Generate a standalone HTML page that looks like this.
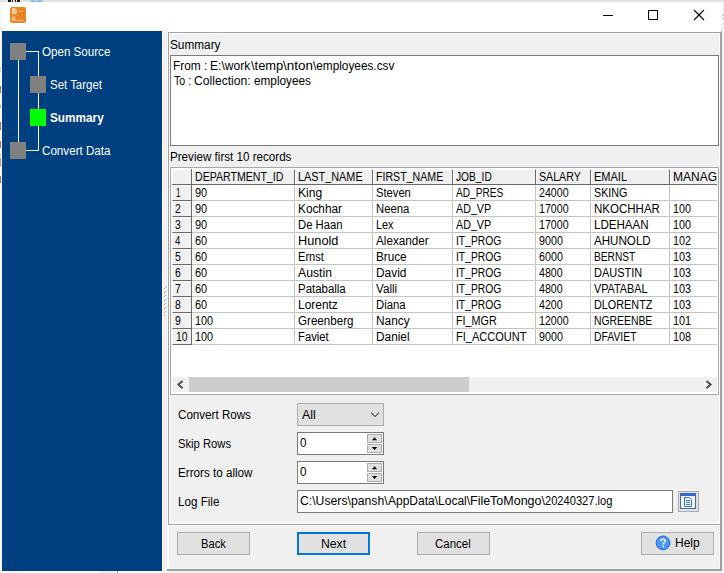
<!DOCTYPE html>
<html><head><meta charset="utf-8"><title>FileToMongo</title>
<style>
html,body{margin:0;padding:0;}
body{width:724px;height:573px;overflow:hidden;background:#fff;position:relative;font-family:"Liberation Sans",sans-serif;font-size:12px;color:#000;}
.a{position:absolute;}
.t{position:absolute;white-space:pre;line-height:16px;height:16px;transform-origin:0 0;}
.u{font-style:normal;position:relative;top:-1px;}
.btn{position:absolute;background:#e1e1e1;border:1px solid #adadad;box-sizing:border-box;}
.sunk{position:absolute;background:#fff;box-sizing:border-box;border:1px solid #7a7a7a;}
.hc{position:absolute;background:#f0f0f0;box-sizing:border-box;border:1px solid;border-color:#fff #696969 #696969 #fff;}
</style></head><body>

<div class="a" style="left:0px;top:0px;width:724px;height:2px;background:#e2e2e2;"></div>
<div class="a" style="left:8px;top:0px;width:1.5px;height:1.6px;background:#1a1a1a;"></div>
<div class="a" style="left:10px;top:0px;width:1.2px;height:1.6px;background:#1a1a1a;"></div>
<div class="a" style="left:12px;top:0px;width:1.2px;height:1.6px;background:#1a1a1a;"></div>
<div class="a" style="left:14.5px;top:0px;width:1.6px;height:1.6px;background:#1a1a1a;"></div>
<div class="a" style="left:17px;top:0px;width:1.4px;height:1.6px;background:#1a1a1a;"></div>
<div class="a" style="left:18.4px;top:0px;width:1.8px;height:1.6px;background:#1a1a1a;"></div>
<div class="a" style="left:30px;top:0px;width:13px;height:2px;background:#a6c8ee;"></div>
<div class="a" style="left:32px;top:1px;width:1.5px;height:1px;background:#6a9ad6;"></div>
<div class="a" style="left:38px;top:1px;width:3px;height:1px;background:#6a9ad6;"></div>
<div class="a" style="left:0px;top:2px;width:2px;height:571px;background:#f6f6f6;"></div>
<div class="a" style="left:0px;top:67px;width:1.3px;height:5px;background:#9fd8e8;opacity:.6;"></div>
<div class="a" style="left:0px;top:86px;width:1.3px;height:7px;background:#3a2a30;opacity:.6;"></div>
<div class="a" style="left:0px;top:105px;width:1.3px;height:3px;background:#8a8a90;opacity:.6;"></div>
<div class="a" style="left:0px;top:122px;width:1.3px;height:8px;background:#5a1a2a;opacity:.6;"></div>
<div class="a" style="left:0px;top:141px;width:1.3px;height:7px;background:#7a1a20;opacity:.6;"></div>
<div class="a" style="left:0px;top:153px;width:1.3px;height:14px;background:#c8c4c0;opacity:.6;"></div>
<div class="a" style="left:0px;top:158px;width:1.3px;height:8px;background:#a07850;opacity:.6;"></div>
<div class="a" style="left:0px;top:176px;width:1.3px;height:7px;background:#3a3030;opacity:.6;"></div>
<div class="a" style="left:0px;top:571px;width:724px;height:2px;background:#f6f6f6;"></div>
<div class="a" style="left:101px;top:571px;width:17px;height:2px;background:#ececec;"></div>
<div class="a" style="left:117px;top:571px;width:1px;height:2px;background:#8c8c8c;"></div>
<div class="a" style="left:722px;top:2px;width:2px;height:569px;background:#f3f3f3;"></div>
<div class="a" style="left:2px;top:2px;width:720px;height:29px;background:#fff;"></div>
<div class="a" style="left:722px;top:15px;width:2px;height:1px;background:#c8c8c8;"></div>
<div class="a" style="left:722px;top:18px;width:2px;height:1px;background:#c8c8c8;"></div>
<svg class="a" style="left:10px;top:7px" width="16" height="16" viewBox="0 0 16 16"><rect x="0" y="0" width="16" height="16" rx="2.2" fill="#e9821f"/><path d="M2.3 1.7 H5 L6.4 3.1 V6.7 H2.3 Z" fill="#fff" fill-opacity=".5" stroke="#fff" stroke-width="0.7" stroke-opacity=".8"/><rect x="8.2" y="3.8" width="4.8" height="1.2" fill="#fff" opacity=".33"/><rect x="7.4" y="7.8" width="1.2" height="1.1" fill="#fff" opacity=".33"/><ellipse cx="3.5" cy="11.8" rx="2" ry="2.5" fill="#fff" fill-opacity=".22" stroke="#fff" stroke-width="0.6" stroke-opacity=".55"/><rect x="3" y="10.9" width="1.1" height="2" fill="#fff" opacity=".9"/><rect x="6.2" y="12.8" width="8.2" height="1.4" fill="#fff" opacity=".38"/></svg>
<div class="a" style="left:603px;top:15px;width:10px;height:1px;background:#000;"></div>
<div class="a" style="left:648px;top:10px;width:10px;height:10px;box-sizing:border-box;border:1px solid #000"></div>
<svg class="a" style="left:693px;top:9px" width="12" height="12" viewBox="0 0 12 12"><path d="M1 1 L11 11 M11 1 L1 11" stroke="#000" stroke-width="1.1" fill="none"/></svg>
<div class="a" style="left:162px;top:31px;width:560px;height:540px;background:#f0f0f0;"></div>
<div class="a" style="left:2px;top:31px;width:160px;height:540px;background:#003f80;"></div>
<div class="a" style="left:162px;top:31px;width:1px;height:540px;background:#fff;"></div>
<div class="a" style="left:167px;top:31px;width:1px;height:540px;background:#fff;"></div>
<div class="a" style="left:168px;top:525px;width:1px;height:46px;background:#fff;"></div>
<div class="a" style="left:167px;top:525px;width:553px;height:1px;background:#fff;"></div>
<div class="a" style="left:167px;top:31px;width:554px;height:1px;background:#fff;"></div>
<div class="a" style="left:721px;top:31px;width:1px;height:540px;background:#a0a0a0;"></div>
<div class="a" style="left:720px;top:32px;width:1px;height:493px;background:#a2a2a8;"></div>
<div class="a" style="left:720px;top:525px;width:1px;height:46px;background:#a0a0a0;"></div>
<div class="a" style="left:719px;top:526px;width:1px;height:43px;background:#f4f4f4;"></div>
<div class="a" style="left:169px;top:568px;width:551px;height:1px;background:#f4f4f4;"></div>
<div class="a" style="left:167px;top:569px;width:555px;height:2px;background:#a0a0a0;"></div>
<div class="a" style="left:168px;top:32px;width:553px;height:493px;box-sizing:border-box;border:1px solid #a2a2a8;"></div>
<div class="a" style="left:169px;top:33px;width:551px;height:491px;box-sizing:border-box;border:1px solid #fff;"></div>
<div class="a" style="left:18px;top:59px;width:1px;height:84px;background:#fff;"></div>
<div class="a" style="left:26px;top:51px;width:13px;height:1px;background:#fff;"></div>
<div class="a" style="left:38px;top:51px;width:1px;height:100px;background:#fff;"></div>
<div class="a" style="left:26px;top:150px;width:13px;height:1px;background:#fff;"></div>
<div class="a" style="left:10px;top:43px;width:16px;height:17px;background:#808080;"></div>
<div class="a" style="left:30px;top:76px;width:16px;height:17px;background:#808080;"></div>
<div class="a" style="left:30px;top:109px;width:16px;height:17px;background:#00ff00;"></div>
<div class="a" style="left:10px;top:142px;width:16px;height:17px;background:#808080;"></div>
<div class="a" style="left:165px;top:287px;width:1px;height:1px;background:#adadad;"></div>
<div class="a" style="left:164px;top:288px;width:1px;height:1px;background:#adadad;"></div>
<div class="a" style="left:166px;top:288px;width:1px;height:1px;background:#fff;"></div>
<div class="a" style="left:165px;top:289px;width:1px;height:1px;background:#fff;"></div>
<div class="a" style="left:165px;top:291px;width:1px;height:1px;background:#adadad;"></div>
<div class="a" style="left:164px;top:292px;width:1px;height:1px;background:#adadad;"></div>
<div class="a" style="left:166px;top:292px;width:1px;height:1px;background:#fff;"></div>
<div class="a" style="left:165px;top:293px;width:1px;height:1px;background:#fff;"></div>
<div class="a" style="left:165px;top:295px;width:1px;height:1px;background:#adadad;"></div>
<div class="a" style="left:164px;top:296px;width:1px;height:1px;background:#adadad;"></div>
<div class="a" style="left:166px;top:296px;width:1px;height:1px;background:#fff;"></div>
<div class="a" style="left:165px;top:297px;width:1px;height:1px;background:#fff;"></div>
<div class="a" style="left:165px;top:299px;width:1px;height:1px;background:#adadad;"></div>
<div class="a" style="left:164px;top:300px;width:1px;height:1px;background:#adadad;"></div>
<div class="a" style="left:166px;top:300px;width:1px;height:1px;background:#fff;"></div>
<div class="a" style="left:165px;top:301px;width:1px;height:1px;background:#fff;"></div>
<div class="a" style="left:165px;top:303px;width:1px;height:1px;background:#adadad;"></div>
<div class="a" style="left:164px;top:304px;width:1px;height:1px;background:#adadad;"></div>
<div class="a" style="left:166px;top:304px;width:1px;height:1px;background:#fff;"></div>
<div class="a" style="left:165px;top:305px;width:1px;height:1px;background:#fff;"></div>
<div class="a" style="left:165px;top:307px;width:1px;height:1px;background:#adadad;"></div>
<div class="a" style="left:164px;top:308px;width:1px;height:1px;background:#adadad;"></div>
<div class="a" style="left:166px;top:308px;width:1px;height:1px;background:#fff;"></div>
<div class="a" style="left:165px;top:309px;width:1px;height:1px;background:#fff;"></div>
<div class="a" style="left:165px;top:311px;width:1px;height:1px;background:#adadad;"></div>
<div class="a" style="left:164px;top:312px;width:1px;height:1px;background:#adadad;"></div>
<div class="a" style="left:166px;top:312px;width:1px;height:1px;background:#fff;"></div>
<div class="a" style="left:165px;top:313px;width:1px;height:1px;background:#fff;"></div>
<div class="a" style="left:164px;top:315px;width:1px;height:1px;background:#b4b4b4;"></div>
<div class="sunk" style="left:170px;top:55px;width:549px;height:91px"></div>
<div class="a" style="left:170px;top:167px;width:549px;height:228px;box-sizing:border-box;border:1px solid #a6a6ac;background:#fff"></div>
<div class="hc" style="left:172px;top:169px;width:20px;height:16px;"></div>
<div class="hc" style="left:192px;top:169px;width:103px;height:16px;"></div>
<div class="hc" style="left:295px;top:169px;width:78px;height:16px;"></div>
<div class="hc" style="left:373px;top:169px;width:80px;height:16px;"></div>
<div class="hc" style="left:453px;top:169px;width:83px;height:16px;"></div>
<div class="hc" style="left:536px;top:169px;width:55px;height:16px;"></div>
<div class="hc" style="left:591px;top:169px;width:79px;height:16px;"></div>
<div class="hc" style="left:670px;top:169px;width:47px;height:16px;border-right:none;"></div>
<div class="hc" style="left:172px;top:185px;width:20px;height:16px"></div>
<div class="a" style="left:192px;top:200px;width:525px;height:1px;background:#c4c4c4;"></div>
<div class="hc" style="left:172px;top:201px;width:20px;height:16px"></div>
<div class="a" style="left:192px;top:216px;width:525px;height:1px;background:#c4c4c4;"></div>
<div class="hc" style="left:172px;top:217px;width:20px;height:16px"></div>
<div class="a" style="left:192px;top:232px;width:525px;height:1px;background:#c4c4c4;"></div>
<div class="hc" style="left:172px;top:233px;width:20px;height:16px"></div>
<div class="a" style="left:192px;top:248px;width:525px;height:1px;background:#c4c4c4;"></div>
<div class="hc" style="left:172px;top:249px;width:20px;height:16px"></div>
<div class="a" style="left:192px;top:264px;width:525px;height:1px;background:#c4c4c4;"></div>
<div class="hc" style="left:172px;top:265px;width:20px;height:16px"></div>
<div class="a" style="left:192px;top:280px;width:525px;height:1px;background:#c4c4c4;"></div>
<div class="hc" style="left:172px;top:281px;width:20px;height:16px"></div>
<div class="a" style="left:192px;top:296px;width:525px;height:1px;background:#c4c4c4;"></div>
<div class="hc" style="left:172px;top:297px;width:20px;height:16px"></div>
<div class="a" style="left:192px;top:312px;width:525px;height:1px;background:#c4c4c4;"></div>
<div class="hc" style="left:172px;top:313px;width:20px;height:16px"></div>
<div class="a" style="left:192px;top:328px;width:525px;height:1px;background:#c4c4c4;"></div>
<div class="hc" style="left:172px;top:329px;width:20px;height:16px"></div>
<div class="a" style="left:192px;top:344px;width:525px;height:1px;background:#c4c4c4;"></div>
<div class="a" style="left:294px;top:185px;width:1px;height:160px;background:#c4c4c4;"></div>
<div class="a" style="left:372px;top:185px;width:1px;height:160px;background:#c4c4c4;"></div>
<div class="a" style="left:452px;top:185px;width:1px;height:160px;background:#c4c4c4;"></div>
<div class="a" style="left:535px;top:185px;width:1px;height:160px;background:#c4c4c4;"></div>
<div class="a" style="left:590px;top:185px;width:1px;height:160px;background:#c4c4c4;"></div>
<div class="a" style="left:669px;top:185px;width:1px;height:160px;background:#c4c4c4;"></div>
<div class="a" style="left:172px;top:184px;width:545px;height:1px;background:#696969;"></div>
<div class="a" style="left:191px;top:169px;width:1px;height:176px;background:#696969;"></div>
<div class="a" style="left:172px;top:377px;width:545px;height:15px;background:#f0f0f0;"></div>
<div class="a" style="left:189px;top:377px;width:280px;height:15px;background:#cdcdcd;"></div>
<svg class="a" style="left:172px;top:377px" width="17" height="15" viewBox="0 0 17 15"><path d="M10.6 4 L6.4 7.6 L10.6 11.2" stroke="#505050" stroke-width="2" fill="none"/></svg>
<svg class="a" style="left:700px;top:377px" width="17" height="15" viewBox="0 0 17 15"><path d="M6.4 4 L10.6 7.6 L6.4 11.2" stroke="#505050" stroke-width="2" fill="none"/></svg>
<div class="btn" style="left:297px;top:403px;width:87px;height:23px"></div>
<svg class="a" style="left:369px;top:410px" width="12" height="9" viewBox="0 0 12 9"><path d="M2.1 2.6 L6.05 6.6 L10 2.6" stroke="#444" stroke-width="1.05" fill="none"/></svg>
<div class="sunk" style="left:297px;top:432px;width:87px;height:23px"></div>
<div class="btn" style="left:367px;top:434px;width:15px;height:9px"></div>
<div class="btn" style="left:367px;top:444px;width:15px;height:9px"></div>
<svg class="a" style="left:371px;top:437px" width="7" height="4" viewBox="0 0 7 4"><path d="M0.9 3.2 L3.55 0.3 L6.2 3.2 Z" fill="#000"/></svg>
<svg class="a" style="left:371px;top:447px" width="7" height="4" viewBox="0 0 7 4"><path d="M0.9 0 L3.55 2.9 L6.2 0 Z" fill="#000"/></svg>
<div class="sunk" style="left:297px;top:461px;width:87px;height:23px"></div>
<div class="btn" style="left:367px;top:463px;width:15px;height:9px"></div>
<div class="btn" style="left:367px;top:473px;width:15px;height:9px"></div>
<svg class="a" style="left:371px;top:466px" width="7" height="4" viewBox="0 0 7 4"><path d="M0.9 3.2 L3.55 0.3 L6.2 3.2 Z" fill="#000"/></svg>
<svg class="a" style="left:371px;top:476px" width="7" height="4" viewBox="0 0 7 4"><path d="M0.9 0 L3.55 2.9 L6.2 0 Z" fill="#000"/></svg>
<div class="sunk" style="left:297px;top:490px;width:376px;height:23px"></div>
<div class="btn" style="left:678px;top:491px;width:21px;height:21px"></div>
<svg class="a" style="left:680px;top:493px" width="16" height="16" viewBox="0 0 16 16"><rect x="0" y="0" width="16" height="16" fill="#2f6bcb"/><rect x="1" y="3" width="14" height="12" fill="#f8f5f1"/><rect x="1" y="1" width="1.3" height="1.3" fill="#e8102a"/><path d="M4.5 4.5 H9.3 L11.5 6.7 V13.5 H4.5 Z" fill="#dcf5ff" stroke="#3b73d3" stroke-width="1"/><path d="M6 7.5 H10 M6 9.5 H10 M6 11.5 H10" stroke="#5f7c7c" stroke-width="1"/></svg>
<div class="btn" style="left:177px;top:532px;width:73px;height:23px"></div>
<div class="btn" style="left:297px;top:532px;width:73px;height:23px;border:2px solid #0078d7"></div>
<div class="btn" style="left:417px;top:532px;width:73px;height:23px"></div>
<div class="btn" style="left:641px;top:532px;width:73px;height:23px"></div>
<svg class="a" style="left:655px;top:535px" width="16" height="16" viewBox="0 0 16 16"><circle cx="8" cy="7.9" r="6.9" fill="#4b93f7" stroke="#1d6be0" stroke-width="1"/><path d="M5.9 6.3 Q5.9 4.2 8 4.2 Q10.1 4.2 10.1 6 Q10.1 7.1 9 7.9 Q8.1 8.6 8.1 9.6" stroke="#fff" stroke-width="1.5" fill="none"/><rect x="7.3" y="10.6" width="1.6" height="1.6" fill="#fff"/></svg>
<span class="t" style="left:42px;top:44px;transform:scaleX(0.9663);color:#fff">Open Source</span>
<span class="t" style="left:50px;top:77px;transform:scaleX(0.9537);color:#fff">Set Target</span>
<span class="t" style="left:50px;top:110px;transform:scaleX(0.9833);font-weight:bold;color:#fff">Summary</span>
<span class="t" style="left:42px;top:143px;transform:scaleX(0.9694);color:#fff">Convert Data</span>
<span class="t" style="left:170px;top:37px;transform:scaleX(0.9833);">Summary</span>
<span class="t" style="left:173px;top:58px;transform:scaleX(0.9877);">From :</span>
<span class="t" style="left:210px;top:58px;transform:scaleX(1.0051);">E:\work</span>
<span class="t" style="left:251px;top:58px;transform:scaleX(1.0712);">\temp</span>
<span class="t" style="left:283px;top:58px;transform:scaleX(1.1192);">\nton</span>
<span class="t" style="left:313px;top:58px;transform:scaleX(0.9837);">\employees.csv</span>
<span class="t" style="left:174px;top:73px;transform:scaleX(0.8833);">To :</span>
<span class="t" style="left:194px;top:73px;transform:scaleX(1.0110);">Collection:</span>
<span class="t" style="left:254px;top:73px;transform:scaleX(0.9817);">employees</span>
<span class="t" style="left:170px;top:149px;transform:scaleX(0.9685);">Preview first 10 records</span>
<span class="t" style="left:195px;top:169px;transform:scaleX(0.8810);">DEPARTMENT<i class="u">_</i>ID</span>
<span class="t" style="left:298px;top:169px;transform:scaleX(0.9057);">LAST<i class="u">_</i>NAME</span>
<span class="t" style="left:376px;top:169px;transform:scaleX(0.8846);">FIRST<i class="u">_</i>NAME</span>
<span class="t" style="left:456px;top:169px;transform:scaleX(0.8509);">JOB<i class="u">_</i>ID</span>
<span class="t" style="left:539px;top:169px;transform:scaleX(0.8865);">SALARY</span>
<span class="t" style="left:594px;top:169px;transform:scaleX(0.9180);">EMAIL</span>
<span class="t" style="left:673px;top:169px;">MANAG</span>
<span class="t" style="left:176px;top:185px;transform:scaleX(0.6857);">1</span>
<span class="t" style="left:195px;top:185px;transform:scaleX(0.9120);">90</span>
<span class="t" style="left:298px;top:185px;transform:scaleX(1.0067);">King</span>
<span class="t" style="left:376px;top:185px;transform:scaleX(0.9324);">Steven</span>
<span class="t" style="left:456px;top:185px;transform:scaleX(0.8414);">AD<i class="u">_</i>PRES</span>
<span class="t" style="left:539px;top:185px;transform:scaleX(0.8892);">24000</span>
<span class="t" style="left:594px;top:185px;transform:scaleX(0.8944);">SKING</span>
<span class="t" style="left:175px;top:201px;transform:scaleX(0.8696);">2</span>
<span class="t" style="left:195px;top:201px;transform:scaleX(0.9120);">90</span>
<span class="t" style="left:298px;top:201px;transform:scaleX(0.9839);">Kochhar</span>
<span class="t" style="left:376px;top:201px;transform:scaleX(0.9449);">Neena</span>
<span class="t" style="left:456px;top:201px;transform:scaleX(0.8929);">AD<i class="u">_</i>VP</span>
<span class="t" style="left:539px;top:201px;transform:scaleX(0.8875);">17000</span>
<span class="t" style="left:594px;top:201px;transform:scaleX(0.9597);">NKOCHHAR</span>
<span class="t" style="left:673px;top:201px;transform:scaleX(0.8960);">100</span>
<span class="t" style="left:175px;top:217px;transform:scaleX(0.8696);">3</span>
<span class="t" style="left:195px;top:217px;transform:scaleX(0.9120);">90</span>
<span class="t" style="left:298px;top:217px;transform:scaleX(0.9399);">De Haan</span>
<span class="t" style="left:376px;top:217px;transform:scaleX(0.8986);">Lex</span>
<span class="t" style="left:456px;top:217px;transform:scaleX(0.8929);">AD<i class="u">_</i>VP</span>
<span class="t" style="left:539px;top:217px;transform:scaleX(0.8875);">17000</span>
<span class="t" style="left:594px;top:217px;transform:scaleX(0.9644);">LDEHAAN</span>
<span class="t" style="left:673px;top:217px;transform:scaleX(0.8960);">100</span>
<span class="t" style="left:175px;top:233px;transform:scaleX(0.8000);">4</span>
<span class="t" style="left:195px;top:233px;transform:scaleX(0.9120);">60</span>
<span class="t" style="left:298px;top:233px;transform:scaleX(1.0621);">Hunold</span>
<span class="t" style="left:376px;top:233px;transform:scaleX(0.9759);">Alexander</span>
<span class="t" style="left:456px;top:233px;transform:scaleX(0.8571);">IT<i class="u">_</i>PROG</span>
<span class="t" style="left:539px;top:233px;transform:scaleX(0.8932);">9000</span>
<span class="t" style="left:594px;top:233px;transform:scaleX(0.9665);">AHUNOLD</span>
<span class="t" style="left:673px;top:233px;transform:scaleX(0.9081);">102</span>
<span class="t" style="left:175px;top:249px;transform:scaleX(0.8696);">5</span>
<span class="t" style="left:195px;top:249px;transform:scaleX(0.9120);">60</span>
<span class="t" style="left:298px;top:249px;transform:scaleX(0.9222);">Ernst</span>
<span class="t" style="left:376px;top:249px;transform:scaleX(0.9767);">Bruce</span>
<span class="t" style="left:456px;top:249px;transform:scaleX(0.8571);">IT<i class="u">_</i>PROG</span>
<span class="t" style="left:539px;top:249px;transform:scaleX(0.8932);">6000</span>
<span class="t" style="left:594px;top:249px;transform:scaleX(0.8463);">BERNST</span>
<span class="t" style="left:673px;top:249px;transform:scaleX(0.9081);">103</span>
<span class="t" style="left:175px;top:265px;transform:scaleX(0.8696);">6</span>
<span class="t" style="left:195px;top:265px;transform:scaleX(0.9120);">60</span>
<span class="t" style="left:298px;top:265px;transform:scaleX(1.0168);">Austin</span>
<span class="t" style="left:376px;top:265px;transform:scaleX(0.9931);">David</span>
<span class="t" style="left:456px;top:265px;transform:scaleX(0.8571);">IT<i class="u">_</i>PROG</span>
<span class="t" style="left:539px;top:265px;transform:scaleX(0.8846);">4800</span>
<span class="t" style="left:594px;top:265px;transform:scaleX(0.9143);">DAUSTIN</span>
<span class="t" style="left:673px;top:265px;transform:scaleX(0.9081);">103</span>
<span class="t" style="left:175px;top:281px;transform:scaleX(0.8696);">7</span>
<span class="t" style="left:195px;top:281px;transform:scaleX(0.9120);">60</span>
<span class="t" style="left:298px;top:281px;transform:scaleX(0.9531);">Pataballa</span>
<span class="t" style="left:376px;top:281px;transform:scaleX(0.9714);">Valli</span>
<span class="t" style="left:456px;top:281px;transform:scaleX(0.8571);">IT<i class="u">_</i>PROG</span>
<span class="t" style="left:539px;top:281px;transform:scaleX(0.8846);">4800</span>
<span class="t" style="left:594px;top:281px;transform:scaleX(0.9000);">VPATABAL</span>
<span class="t" style="left:673px;top:281px;transform:scaleX(0.9081);">103</span>
<span class="t" style="left:175px;top:297px;transform:scaleX(0.8696);">8</span>
<span class="t" style="left:195px;top:297px;transform:scaleX(0.9120);">60</span>
<span class="t" style="left:298px;top:297px;transform:scaleX(0.9948);">Lorentz</span>
<span class="t" style="left:376px;top:297px;transform:scaleX(0.9443);">Diana</span>
<span class="t" style="left:456px;top:297px;transform:scaleX(0.8571);">IT<i class="u">_</i>PROG</span>
<span class="t" style="left:539px;top:297px;transform:scaleX(0.8846);">4200</span>
<span class="t" style="left:594px;top:297px;transform:scaleX(0.9028);">DLORENTZ</span>
<span class="t" style="left:673px;top:297px;transform:scaleX(0.9081);">103</span>
<span class="t" style="left:175px;top:313px;transform:scaleX(0.8696);">9</span>
<span class="t" style="left:195px;top:313px;transform:scaleX(0.9067);">100</span>
<span class="t" style="left:298px;top:313px;transform:scaleX(0.9671);">Greenberg</span>
<span class="t" style="left:376px;top:313px;transform:scaleX(0.9879);">Nancy</span>
<span class="t" style="left:456px;top:313px;transform:scaleX(0.8983);">FI<i class="u">_</i>MGR</span>
<span class="t" style="left:539px;top:313px;transform:scaleX(0.8875);">12000</span>
<span class="t" style="left:594px;top:313px;transform:scaleX(0.8652);">NGREENBE</span>
<span class="t" style="left:673px;top:313px;transform:scaleX(0.9081);">101</span>
<span class="t" style="left:176px;top:329px;transform:scaleX(0.8667);">10</span>
<span class="t" style="left:195px;top:329px;transform:scaleX(0.9067);">100</span>
<span class="t" style="left:298px;top:329px;transform:scaleX(0.9386);">Faviet</span>
<span class="t" style="left:376px;top:329px;transform:scaleX(0.9860);">Daniel</span>
<span class="t" style="left:456px;top:329px;transform:scaleX(0.9192);">FI<i class="u">_</i>ACCOUNT</span>
<span class="t" style="left:539px;top:329px;transform:scaleX(0.8932);">9000</span>
<span class="t" style="left:594px;top:329px;transform:scaleX(0.8646);">DFAVIET</span>
<span class="t" style="left:673px;top:329px;transform:scaleX(0.9081);">108</span>
<span class="t" style="left:178px;top:407px;transform:scaleX(0.9678);">Convert Rows</span>
<span class="t" style="left:178px;top:436px;transform:scaleX(0.9363);">Skip Rows</span>
<span class="t" style="left:178px;top:465px;transform:scaleX(0.9716);">Errors to allow</span>
<span class="t" style="left:178px;top:494px;transform:scaleX(0.9697);">Log File</span>
<span class="t" style="left:302px;top:407px;transform:scaleX(1.0320);">All</span>
<span class="t" style="left:300px;top:435px;transform:scaleX(0.9739);">0</span>
<span class="t" style="left:300px;top:464px;transform:scaleX(0.9739);">0</span>
<span class="t" style="left:300px;top:493px;transform:scaleX(1.0187);">C:\Users\pansh\</span>
<span class="t" style="left:388px;top:493px;">AppData\Local\</span>
<span class="t" style="left:470px;top:493px;transform:scaleX(1.0408);">FileToMongo\</span>
<span class="t" style="left:545px;top:493px;transform:scaleX(0.9259);">20240327.log</span>
<span class="t" style="left:201px;top:536px;transform:scaleX(0.9320);">Back</span>
<span class="t" style="left:321px;top:536px;transform:scaleX(1.0170);">Next</span>
<span class="t" style="left:435px;top:536px;transform:scaleX(0.9556);">Cancel</span>
<span class="t" style="left:675px;top:535px;">Help</span>
</body></html>
